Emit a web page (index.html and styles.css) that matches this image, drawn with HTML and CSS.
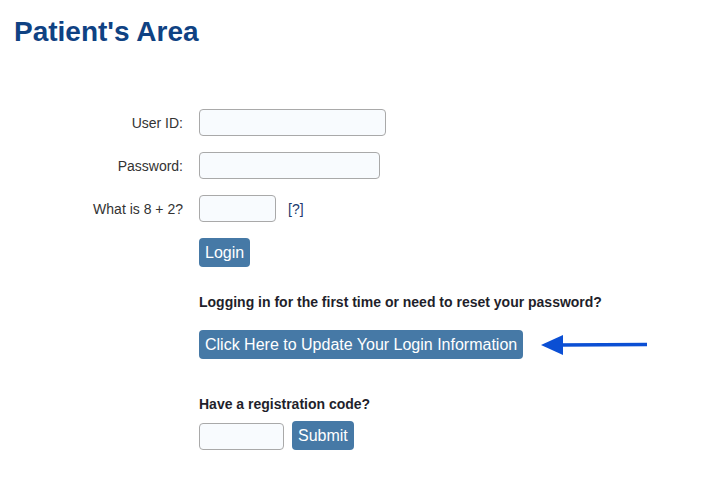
FILE: index.html
```html
<!DOCTYPE html>
<html lang="en">
<head>
<meta charset="utf-8">
<title>Patient's Area</title>
<link rel="stylesheet" href="styles.css">
</head>
<body>
<div class="page">
  <h1 class="title">Patient's Area</h1>
  <form class="login-form">
    <label class="label" for="uid">User ID:</label>
    <div class="field"><input id="uid" class="input input-user" type="text"></div>

    <label class="label" for="pwd">Password:</label>
    <div class="field"><input id="pwd" class="input input-pass" type="password"></div>

    <label class="label" for="cap">What is 8 + 2?</label>
    <div class="field"><input id="cap" class="input input-cap" type="text"><a class="help" href="#">[?]</a></div>

    <div></div>
    <div class="field"><button type="button" class="btn">Login</button></div>

    <div></div>
    <div class="extra">
      <p class="note">Logging in for the first time or need to reset your password?</p>
      <div class="update-row">
        <button type="button" class="btn">Click Here to Update Your Login Information</button>
        <svg class="arrow" width="106" height="22" viewBox="0 0 106 22" aria-hidden="true">
          <line x1="18" y1="11" x2="106" y2="10.5" stroke="#0b4fd4" stroke-width="3.5"/>
          <polygon points="0,11 22,1 22,21" fill="#0b4fd4"/>
        </svg>
      </div>
      <p class="note note-reg">Have a registration code?</p>
      <div class="reg-row">
        <input class="input input-reg" type="text">
        <button type="button" class="btn">Submit</button>
      </div>
    </div>
  </form>
</div>
</body>
</html>
```
FILE: styles.css
```css
html, body {
  margin: 0;
  padding: 0;
  background: #ffffff;
}

body {
  font-family: "Liberation Sans", Arial, sans-serif;
  color: #333333;
}

.page {
  padding: 16px 14px 0 14px;
}

.title {
  margin: 0;
  font-size: 28px;
  line-height: 32px;
  font-weight: bold;
  color: #0f4283;
}

.login-form {
  margin-top: 61px;
  display: grid;
  grid-template-columns: 169px auto;
  column-gap: 16px;
  row-gap: 16px;
  align-items: center;
}

.label {
  text-align: right;
  font-size: 14px;
  color: #333333;
}

.field {
  display: flex;
  align-items: center;
}

.input {
  box-sizing: border-box;
  height: 27px;
  border: 1px solid #a9a9a9;
  border-radius: 4px;
  background: #f8fbfe;
  padding: 2px 6px;
  font-family: "Liberation Sans", Arial, sans-serif;
  font-size: 14px;
  margin: 0;
}

.input-user { width: 187px; }
.input-pass { width: 181px; }
.input-cap { width: 77px; }
.input-reg { width: 85px; }

.help {
  margin-left: 12px;
  font-size: 14px;
  color: #1c3a6e;
  text-decoration: none;
}

.btn {
  box-sizing: border-box;
  height: 29px;
  padding: 0 6px;
  border: none;
  border-radius: 4px;
  background: #4679a6;
  color: #ffffff;
  font-family: "Liberation Sans", Arial, sans-serif;
  font-size: 16px;
  line-height: 29px;
  cursor: pointer;
}

.extra {
  display: flex;
  flex-direction: column;
  align-items: flex-start;
}

.note {
  margin: 11px 0 0 0;
  font-size: 14px;
  line-height: 16px;
  font-weight: bold;
  color: #1f1f2b;
}

.update-row {
  margin-top: 20px;
  display: flex;
  align-items: center;
}

.arrow {
  margin-left: 18px;
  display: block;
}

.note-reg {
  margin-top: 37px;
}

.reg-row {
  margin-top: 9px;
  display: flex;
  align-items: flex-end;
  gap: 8px;
}
```
